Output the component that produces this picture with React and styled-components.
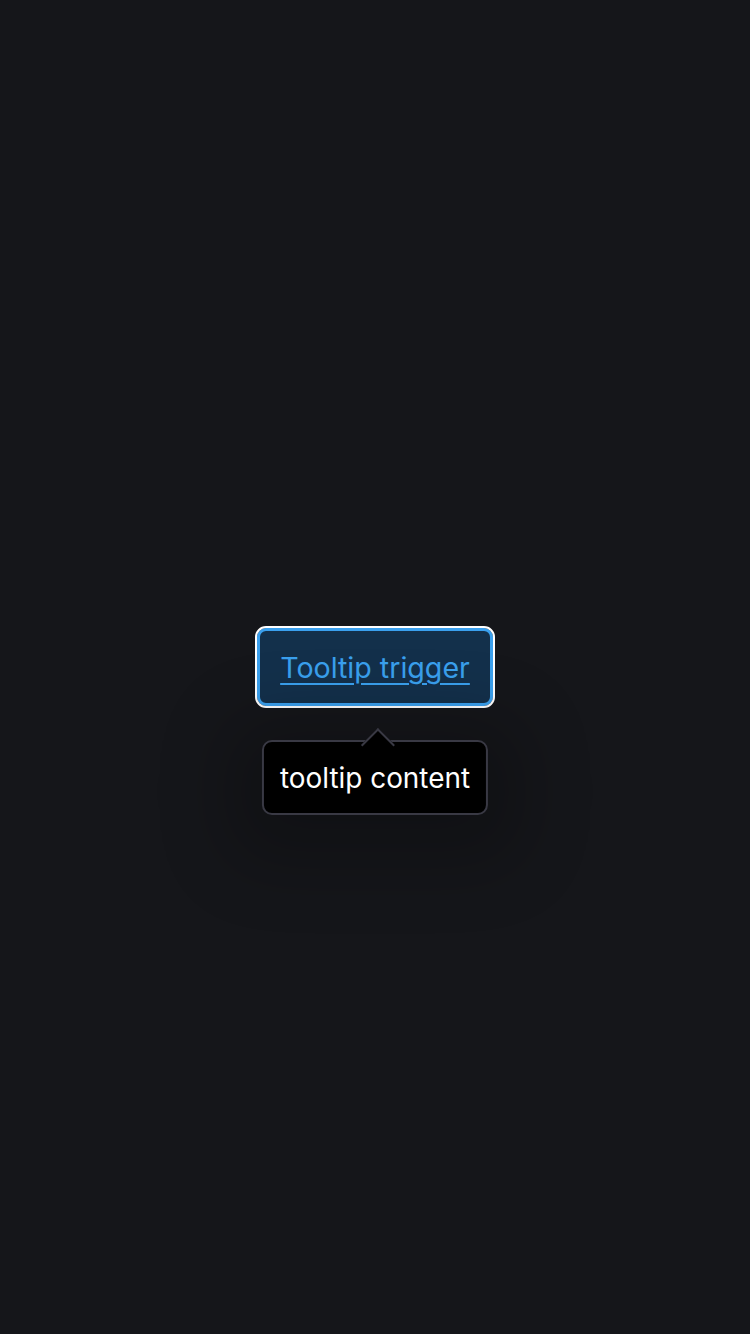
import React from "react";
import styled, { createGlobalStyle } from "styled-components";

const GlobalStyle = createGlobalStyle`
  html, body {
    margin: 0;
    padding: 0;
    background: #15161a;
  }
  body {
    font-family: Inter, "Noto Sans", sans-serif;
  }
`;

const Page = styled.div`
  width: 750px;
  height: 1334px;
  display: flex;
  align-items: center;
  justify-content: center;
  background: #15161a;
`;

const Anchor = styled.div`
  position: relative;
  display: flex;
  flex-direction: column;
  align-items: center;
`;

const Trigger = styled.button`
  box-sizing: border-box;
  width: 236px;
  height: 78px;
  padding: 0;
  border: 3px solid #3aa0ee;
  border-radius: 9px;
  outline: 2px solid #ffffff;
  outline-offset: 0;
  background: #13304b;
  color: #3aa0ee;
  font-family: Inter, "Noto Sans", sans-serif;
  font-size: 28.6px;
  white-space: nowrap;
  text-decoration: underline;
  text-underline-offset: 5px;
  text-decoration-thickness: 2px;
  cursor: pointer;
`;

const Tip = styled.div`
  position: absolute;
  top: 112px;
  left: 50%;
  transform: translateX(-50%);
  box-sizing: border-box;
  height: 75px;
  padding: 0 16px;
  display: flex;
  align-items: center;
  white-space: nowrap;
  background: #000;
  color: #fff;
  border: 2px solid #393944;
  border-radius: 10px;
  font-size: 27.9px;
  box-shadow: 0 14px 70px 34px rgba(0, 0, 0, 0.22);
`;

const Arrow = styled.span`
  position: absolute;
  top: -9px;
  left: 50%;
  box-sizing: border-box;
  width: 24px;
  height: 24px;
  margin-left: -9px;
  background: #000;
  border-top: 2px solid #393944;
  border-left: 2px solid #393944;
  transform: rotate(45deg);
`;

const Label = styled.span`
  position: relative;
`;

export default function App() {
  return (
    <Page>
      <GlobalStyle />
      <Anchor>
        <Trigger>Tooltip trigger</Trigger>
        <Tip>
          <Arrow />
          <Label>tooltip content</Label>
        </Tip>
      </Anchor>
    </Page>
  );
}
